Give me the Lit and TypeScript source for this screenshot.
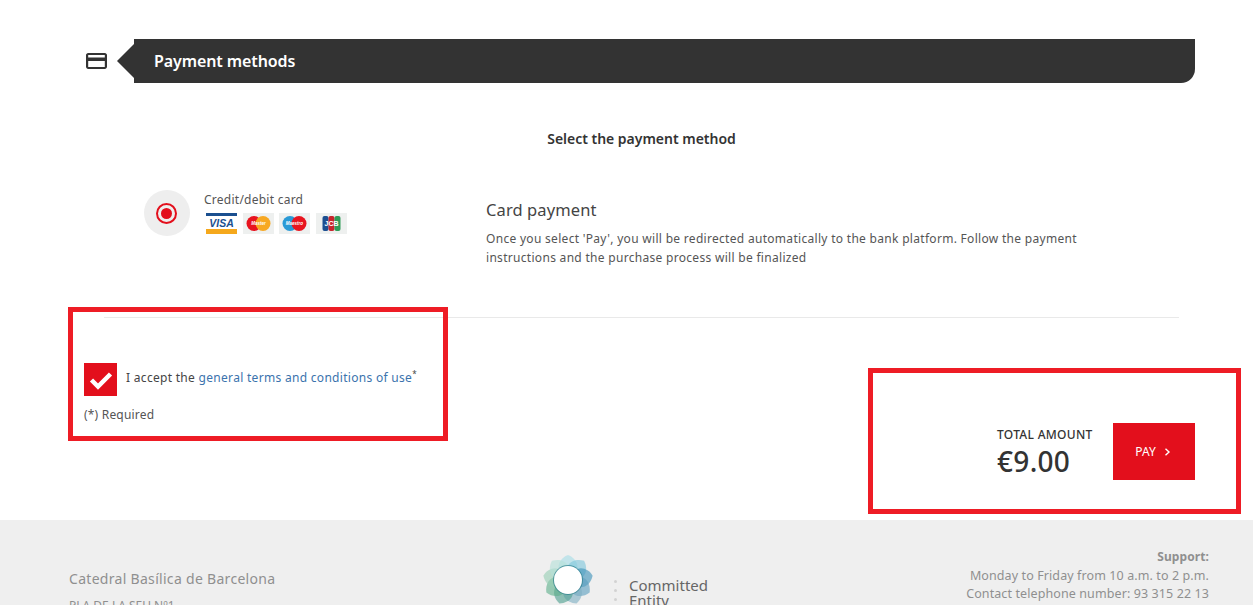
import { LitElement, html, css, svg } from "lit";
import { customElement } from "lit/decorators.js";

const petals = [
  ["#a6dde6", 0], ["#7fc6dc", 40], ["#3f93ba", 80], ["#5d9fc0", 120], ["#7fb0c4", 160],
  ["#4f9f90", 200], ["#5fb08c", 240], ["#98cfb4", 280], ["#b5e0d8", 320],
] as const;

@customElement("app-root")
export class AppRoot extends LitElement {
  static styles = css`
    :host { display: block; width: 1253px; height: 605px; overflow: hidden; position: relative; background: #fff;
      font-family: "Noto Sans", "Open Sans", sans-serif; color: #444; font-size: 12px; letter-spacing: 0.3px; }
    * { box-sizing: border-box; }
    .head { display: flex; align-items: center; margin: 39px 58px 0 86px; height: 44px; }
    .head svg.card { width: 21px; height: 18px; flex: none; margin-right: 10px; }
    .notch { width: 0; height: 0; border-style: solid; border-width: 17px 17px 17px 0; border-color: transparent #333 transparent transparent; flex: none; }
    .bar { flex: 1; height: 44px; background: #333; color: #fff; border-radius: 0 0 14px 0; display: flex; align-items: center; padding-left: 20px; font-size: 16px; font-weight: 600; letter-spacing: -0.1px; }
    .sel { text-align: center; margin: 46px 0 0 30px; font-size: 14px; font-weight: 600; color: #333; line-height: 20px; height: 20px; letter-spacing: -0.02px; }
    .pay { display: flex; margin: 31px 0 0 144px; height: 137px; }
    .radio { width: 46px; height: 46px; border-radius: 50%; background: #eee; display: flex; align-items: center; justify-content: center; flex: none; margin-top: 10px; }
    .radio i { width: 21px; height: 21px; border-radius: 50%; border: 2px solid #e30f1c; display: flex; align-items: center; justify-content: center; margin-left: -1px; }
    .radio i b { width: 11px; height: 11px; background: #e30f1c; border-radius: 50%; }
    .opt { margin: 11px 0 0 14px; width: 282px; flex: none; }
    .opt p { margin: 0 0 4px; color: #555; line-height: 18px; letter-spacing: 0.25px; }
    .logos { display: flex; gap: 5.5px; margin-left: 2px; }
    .logos svg { width: 31px; height: 21px; display: block; }
    .desc { width: 610px; margin-top: 18px; }
    .desc h3 { margin: 0 0 7px; font-size: 16.5px; font-weight: 400; color: #444; line-height: 24px; letter-spacing: 0.1px; }
    .desc p { margin: 0; line-height: 19px; color: #555; }
    hr { border: 0; border-top: 1px solid #e9e9e9; margin: 0 74px 0 104px; height: 1px; }
    .bottom { display: flex; justify-content: space-between; height: 202px; padding: 45px 58px 0 84px; }
    .chk { display: flex; align-items: center; gap: 9px; height: 33px; }
    .chk > span:last-child { padding-bottom: 4px; }
    .box { width: 33px; height: 33px; background: #e30f1c; display: flex; align-items: center; justify-content: center; }
    .box svg { width: 24px; height: 20px; }
    .chk a { color: #3b73ad; text-decoration: none; }
    .req { margin-top: 11px; line-height: 16px; color: #555; letter-spacing: 0.2px; }
    sup { font-size: 8px; line-height: 0; }
    .total { display: flex; gap: 20px; margin-top: 60px; height: 57px; }
    .t { width: 97px; padding-top: 5px; }
    .t small { display: block; font-size: 12px; line-height: 14px; color: #333; font-weight: 500; white-space: nowrap; letter-spacing: 0.3px; margin-left: 1px; }
    .t strong { display: block; font-size: 28px; line-height: 34px; margin: 2px 0 0 1px; font-weight: 500; color: #333; letter-spacing: 0.3px; }
    .btn { width: 82px; height: 57px; background: #e30f1c; color: #fff; display: flex; align-items: center; justify-content: center; gap: 8px; font-size: 12px; letter-spacing: 0; padding-right: 2px; }
    .btn svg { width: 7px; height: 8px; }
    footer { height: 120px; background: #efefef; display: grid; grid-template-columns: 1fr 1fr 1fr; padding: 0 44px 0 69px; color: #8f8f8f; overflow: hidden; letter-spacing: 0; }
    .fa { padding-top: 49px; font-size: 14px; line-height: 20px; letter-spacing: 0.3px; }
    .fa div + div { font-size: 12px; margin-top: 7px; letter-spacing: 0; }
    .fb { display: flex; margin-left: 94px; padding-top: 35px; }
    .fb svg.logo { width: 50px; height: 50px; flex: none; }
    .dots { margin: 25px 0 0 21px; width: 4px; display: flex; flex-direction: column; gap: 6px; }
    .dots i { width: 3px; height: 3px; background: #d2d2d2; border-radius: 50%; }
    .name { margin: 23px 0 0 11px; font-size: 15px; line-height: 15px; color: #666; }
    .fc { text-align: right; padding-top: 28px; line-height: 18.5px; font-size: 12.5px; white-space: nowrap; letter-spacing: 0.1px; }
    .fc b { font-weight: 700; font-size: 12px; }
    .mark { position: absolute; border: 5px solid #ee1c25; pointer-events: none; }
    .m1 { left: 68px; top: 307px; width: 380px; height: 134px; }
    .m2 { left: 868px; top: 368px; width: 373px; height: 146px; }
  `;

  private mc(a: string, b: string, label: string) {
    return html`<svg viewBox="0 0 31 21">
      <rect width="31" height="21" fill="#eef0ef"/>
      <circle cx="11" cy="10.500" r="7.500" fill="${a}"/>
      <circle cx="20" cy="10.500" r="7.500" fill="${b}"/>
      <text x="15.500" y="12" font-size="4.500" fill="#fff" text-anchor="middle" font-family="Liberation Sans" font-style="italic" font-weight="700" letter-spacing="0">${label}</text>
    </svg>`;
  }

  render() {
    return html`
      <div class="head">
        <svg class="card" viewBox="0 0 21 18"><path fill="#333" d="M2.200 1h16.600C20 1 21 2 21 3.200v11.600c0 1.200-1 2.200-2.200 2.200H2.200C1 17 0 16 0 14.800V3.200C0 2 1 1 2.200 1zM2.200 3v2.600h16.600V3zm0 6v6h16.600V9z"/></svg>
        <span class="notch"></span>
        <div class="bar">Payment methods</div>
      </div>
      <div class="sel">Select the payment method</div>
      <div class="pay">
        <div class="radio"><i><b></b></i></div>
        <div class="opt">
          <p>Credit/debit card</p>
          <div class="logos">
            <svg viewBox="0 0 31 21"><rect width="31" height="21" fill="#fff"/><rect width="31" height="3" fill="#1a4f8f"/><rect y="16" width="31" height="5" fill="#f5a81c"/>
              <text x="15.500" y="13.500" font-size="10.500" fill="#1a4f8f" text-anchor="middle" font-family="Liberation Sans" font-style="italic" font-weight="700" letter-spacing="0">VISA</text></svg>
            ${this.mc("#e8141f", "#f7a823", "Master")}
            ${this.mc("#2a9ad6", "#e8141f", "Maestro")}
            <svg viewBox="0 0 31 21"><rect width="31" height="21" fill="#eef0ef"/>
              <rect x="6.500" y="3" width="6" height="15" rx="2" fill="#1d4f91"/><rect x="12.500" y="3" width="6" height="15" rx="2" fill="#c8252c"/><rect x="18.500" y="3" width="6" height="15" rx="2" fill="#2f9b58"/>
              <text x="15.500" y="13" font-size="7" fill="#fff" text-anchor="middle" font-family="Liberation Sans" font-weight="700" letter-spacing="0">JCB</text></svg>
          </div>
        </div>
        <div class="desc">
          <h3>Card payment</h3>
          <p>Once you select 'Pay', you will be redirected automatically to the bank platform. Follow the payment instructions and the purchase process will be finalized</p>
        </div>
      </div>
      <hr />
      <div class="bottom">
        <div>
          <div class="chk">
            <span class="box"><svg viewBox="0 0 24 20"><path d="M2.500 10l6.500 6.500L21.500 4" fill="none" stroke="#fff" stroke-width="4.500"/></svg></span>
            <span>I accept the <a>general terms and conditions of use</a><sup>*</sup></span>
          </div>
          <div class="req">(*) Required</div>
        </div>
        <div class="total">
          <div class="t"><small>TOTAL AMOUNT</small><strong>€9.00</strong></div>
          <div class="btn">PAY <svg viewBox="0 0 7 8"><path d="M1.500.8 5 4 1.500 7.200" fill="none" stroke="#fff" stroke-width="1.400"/></svg></div>
        </div>
      </div>
      <footer>
        <div class="fa"><div>Catedral Basílica de Barcelona</div><div>PLA DE LA SEU Nº1</div></div>
        <div class="fb">
          <svg class="logo" viewBox="-25 -25 50 50">
            ${petals.map(([c, r]) => svg`<path d="M0 0C-15 -9 -10 -21 0 -25C10 -21 15 -9 0 0z" fill="${c}" fill-opacity="0.62" transform="rotate(${r})"/>`)}
            <circle r="15" fill="#2e7f8c" fill-opacity="0.7"/><circle r="14" fill="#fff"/>
          </svg>
          <div class="dots"><i></i><i></i><i></i></div>
          <div class="name">Committed<br />Entity</div>
        </div>
        <div class="fc"><b>Support:</b><br />Monday to Friday from 10 a.m. to 2 p.m.<br />Contact telephone number: 93 315 22 13</div>
      </footer>
      <div class="mark m1"></div>
      <div class="mark m2"></div>
    `;
  }
}
